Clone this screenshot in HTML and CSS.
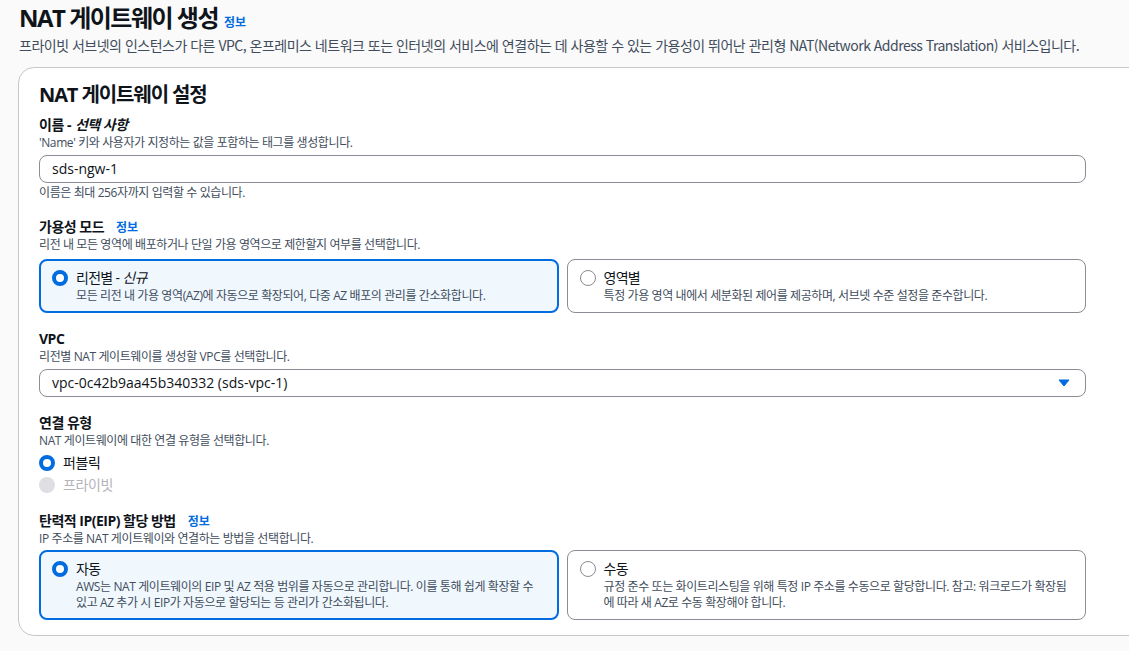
FILE: index.html
```html
<!DOCTYPE html>
<html lang="ko">
<head>
<meta charset="utf-8">
<link rel="stylesheet" href="styles.css">
</head>
<body>
<div class="page">
  <header class="page-head">
    <h1 class="page-title">NAT 게이트웨이 생성 <a class="info" href="#">정보</a></h1>
    <p class="page-desc">프라이빗 서브넷의 인스턴스가 다른 VPC, 온프레미스 네트워크 또는 인터넷의 서비스에 연결하는 데 사용할 수 있는 가용성이 뛰어난 관리형 NAT(Network Address Translation) 서비스입니다.</p>
  </header>

  <section class="panel">
    <h2 class="panel-title">NAT 게이트웨이 설정</h2>
    <div class="fields">
      <div class="field">
        <div class="label">이름 - <i>선택 사항</i></div>
        <div class="desc">'Name' 키와 사용자가 지정하는 값을 포함하는 태그를 생성합니다.</div>
        <div class="input">sds-ngw-1</div>
        <div class="constraint">이름은 최대 256자까지 입력할 수 있습니다.</div>
      </div>

      <div class="field">
        <div class="label">가용성 모드 <a class="info" href="#">정보</a></div>
        <div class="desc">리전 내 모든 영역에 배포하거나 단일 가용 영역으로 제한할지 여부를 선택합니다.</div>
        <div class="tiles">
          <div class="tile selected">
            <span class="radio on"></span>
            <div class="tile-body">
              <div class="tile-title">리전별 - <i>신규</i></div>
              <div class="tile-desc">모든 리전 내 가용 영역(AZ)에 자동으로 확장되어, 다중 AZ 배포의 관리를 간소화합니다.</div>
            </div>
          </div>
          <div class="tile">
            <span class="radio"></span>
            <div class="tile-body">
              <div class="tile-title">영역별</div>
              <div class="tile-desc">특정 가용 영역 내에서 세분화된 제어를 제공하며, 서브넷 수준 설정을 준수합니다.</div>
            </div>
          </div>
        </div>
      </div>

      <div class="field">
        <div class="label">VPC</div>
        <div class="desc">리전별 NAT 게이트웨이를 생성할 VPC를 선택합니다.</div>
        <div class="input select">
          <span>vpc-0c42b9aa45b340332 (sds-vpc-1)</span>
          <svg class="caret" width="12" height="8" viewBox="0 0 12 8"><path d="M1 1h10L6 7z" fill="#006ce0" stroke="#006ce0" stroke-width="1" stroke-linejoin="round"/></svg>
        </div>
      </div>

      <div class="field">
        <div class="label">연결 유형</div>
        <div class="desc">NAT 게이트웨이에 대한 연결 유형을 선택합니다.</div>
        <div class="radio-list">
          <div class="radio-row"><span class="radio on"></span><span>퍼블릭</span></div>
          <div class="radio-row disabled"><span class="radio off"></span><span>프라이빗</span></div>
        </div>
      </div>

      <div class="field">
        <div class="label">탄력적 IP(EIP) 할당 방법 <a class="info" href="#">정보</a></div>
        <div class="desc">IP 주소를 NAT 게이트웨이와 연결하는 방법을 선택합니다.</div>
        <div class="tiles tiles-tight">
          <div class="tile selected">
            <span class="radio on"></span>
            <div class="tile-body">
              <div class="tile-title">자동</div>
              <div class="tile-desc">AWS는 NAT 게이트웨이의 EIP 및 AZ 적용 범위를 자동으로 관리합니다. 이를 통해 쉽게 확장할 수 있고 AZ 추가 시 EIP가 자동으로 할당되는 등 관리가 간소화됩니다.</div>
            </div>
          </div>
          <div class="tile">
            <span class="radio"></span>
            <div class="tile-body">
              <div class="tile-title">수동</div>
              <div class="tile-desc">규정 준수 또는 화이트리스팅을 위해 특정 IP 주소를 수동으로 할당합니다. 참고: 워크로드가 확장됨에 따라 새 AZ로 수동 확장해야 합니다.</div>
            </div>
          </div>
        </div>
      </div>
    </div>
  </section>
</div>
</body>
</html>
```

FILE: styles.css
```css
html, body {
  margin: 0;
  padding: 0;
  overflow: hidden;
  background: #fafafa;
}
body {
  font-family: "Open Sans", "Noto Sans CJK KR", sans-serif;
  color: #0f141a;
  font-size: 14px;
  line-height: 20px;
  letter-spacing: -0.4px;
}
.page {
  padding: 3px 0 0 19px;
}
.page-title {
  margin: 0;
  font-size: 24px;
  line-height: 30px;
  font-weight: 700;
  letter-spacing: -1.5px;
  display: flex;
  align-items: baseline;
  gap: 6px;
}
.info {
  font-size: 12px;
  line-height: 16px;
  font-weight: 700;
  color: #006ce0;
  text-decoration: none;
  letter-spacing: 0;
}
.page-desc {
  margin: 2px 0 0;
  font-family: "Noto Sans CJK KR", sans-serif;
  font-size: 14px;
  line-height: 20px;
  letter-spacing: -0.5px;
  color: #414d5c;
  white-space: nowrap;
}
.panel {
  margin: 12px 0 0 -1px;
  width: 1140px;
  background: #fff;
  border: 1px solid #c6c6cd;
  border-radius: 16px;
  padding: 15px 20px 15px 20px;
  box-sizing: border-box;
}
.panel-title {
  margin: 0 0 8px;
  font-size: 20px;
  line-height: 24px;
  font-weight: 700;
  letter-spacing: -1.1px;
}
.fields {
  width: 1047px;
  display: flex;
  flex-direction: column;
  gap: 16px;
}
.field {
  display: flex;
  flex-direction: column;
}
.label {
  font-size: 14px;
  line-height: 20px;
  font-weight: 700;
  display: flex;
  align-items: baseline;
  letter-spacing: -0.5px;
}
.label i { font-weight: 700; margin-left: 4px; }
.label .info { margin-left: 12px; }
.desc, .constraint {
  font-size: 12px;
  line-height: 16px;
  color: #414d5c;
  letter-spacing: -0.4px;
}
.desc { margin-bottom: 4px; }
.constraint { margin-top: 2px; }
.input {
  height: 28px;
  box-sizing: border-box;
  border: 1px solid #8c8c94;
  border-radius: 8px;
  padding: 0 12px;
  display: flex;
  align-items: center;
  font-size: 14px;
  letter-spacing: 0;
  background: #fff;
}
.select {
  justify-content: space-between;
  padding-right: 15px;
}
.caret { flex: none; }
.tiles {
  display: grid;
  grid-template-columns: 1fr 1fr;
  gap: 8px;
  margin-top: 2px;
}
.tiles-tight { margin-top: -1px; }
.tile {
  display: flex;
  gap: 8px;
  align-items: flex-start;
  border: 1px solid #8c8c94;
  border-radius: 8px;
  padding: 8px 12px 8px 12px;
  background: #fff;
}
.tile.selected {
  border: 2px solid #006ce0;
  background: #f0f8fe;
  padding: 7px 11px 7px 11px;
}
.tile .radio { margin-top: 2px; }
.tile-title {
  font-size: 14px;
  line-height: 20px;
  letter-spacing: -0.7px;
}
.tile-title i { font-style: italic; }
.tile-desc {
  font-size: 12px;
  line-height: 16px;
  color: #414d5c;
  letter-spacing: -0.4px;
}
.radio {
  flex: none;
  width: 16px;
  height: 16px;
  box-sizing: border-box;
  border-radius: 50%;
  border: 1px solid #8c8c94;
  background: #fff;
}
.radio.on {
  border: 4.5px solid #006ce0;
}
.radio.off {
  border: none;
  background: #dedee3;
}
.radio-list {
  display: flex;
  flex-direction: column;
  gap: 2px;
}
.radio-row {
  display: flex;
  align-items: center;
  gap: 8px;
  height: 20px;
}
.radio-row.disabled { color: #b4b4bb; }
```
